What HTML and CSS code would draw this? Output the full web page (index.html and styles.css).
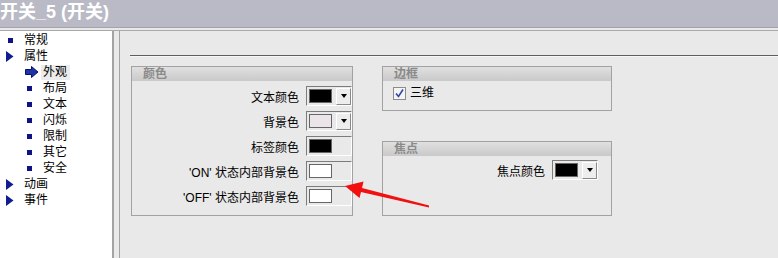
FILE: index.html
```html
<!DOCTYPE html>
<html lang="zh-CN">
<head>
  <meta charset="UTF-8">
  <title>开关_5 (开关)</title>
  <link rel="stylesheet" href="styles.css">
</head>
<body>
  <div class="titlebar">开关_5 (开关)</div>

  <div class="main">
    <!-- 属性树 -->
    <ul class="tree">
      <li class="node"><span class="ico"><i class="sq"></i></span>常规</li>
      <li class="node"><span class="ico"><svg class="tri" width="8" height="11" viewBox="0 0 8 11"><polygon points="0,0 7.5,5.5 0,11" /></svg></span>属性</li>
      <li class="node sub"><span class="ico"><svg class="cur" width="14" height="12" viewBox="0 0 14 12"><polygon points="0.5,3.5 6.5,3.5 6.5,0.5 13,6 6.5,11.5 6.5,8.5 0.5,8.5" /></svg></span><span class="sel">外观</span></li>
      <li class="node sub"><span class="ico"><i class="sq"></i></span>布局</li>
      <li class="node sub"><span class="ico"><i class="sq"></i></span>文本</li>
      <li class="node sub"><span class="ico"><i class="sq"></i></span>闪烁</li>
      <li class="node sub"><span class="ico"><i class="sq"></i></span>限制</li>
      <li class="node sub"><span class="ico"><i class="sq"></i></span>其它</li>
      <li class="node sub"><span class="ico"><i class="sq"></i></span>安全</li>
      <li class="node"><span class="ico"><svg class="tri" width="8" height="11" viewBox="0 0 8 11"><polygon points="0,0 7.5,5.5 0,11" /></svg></span>动画</li>
      <li class="node"><span class="ico"><svg class="tri" width="8" height="11" viewBox="0 0 8 11"><polygon points="0,0 7.5,5.5 0,11" /></svg></span>事件</li>
    </ul>

    <!-- 外观 页 -->
    <div class="content">
      <div class="rule"></div>
      <div class="groups">
        <div class="group group-color">
          <div class="group-head">颜色</div>
          <div class="color-rows">
            <div class="color-row">文本颜色<div class="field"><span class="swatch black"></span><span class="drop"><i></i></span></div></div>
            <div class="color-row">背景色<div class="field"><span class="swatch grey"></span><span class="drop"><i></i></span></div></div>
            <div class="color-row">标签颜色<div class="field"><span class="swatch black"></span></div></div>
            <div class="color-row">'ON' 状态内部背景色<div class="field"><span class="swatch white"></span></div></div>
            <div class="color-row">'OFF' 状态内部背景色<div class="field"><span class="swatch white"></span></div></div>
          </div>
        </div>

        <div class="side">
          <div class="group group-border">
            <div class="group-head">边框</div>
            <label class="check-row">
              <span class="check"><svg width="11" height="11" viewBox="0 0 11 11"><path d="M2 5.5 L4.5 8.5 L9 1.5" /></svg></span>三维
            </label>
          </div>
          <div class="group group-focus">
            <div class="group-head">焦点</div>
            <div class="focus-row">焦点颜色<div class="field"><span class="swatch black"></span><span class="drop"><i></i></span></div></div>
          </div>
        </div>
      </div>
    </div>
  </div>

  <!-- 标注箭头 -->
  <svg class="annot" width="778" height="258" viewBox="0 0 778 258">
    <polygon points="345,186 363.5,181.5 362,188 429,205.5 429,207.5 361,192 359.5,198" />
  </svg>
</body>
</html>
```

FILE: styles.css
```css
body {
  margin: 0;
  width: 778px;
  height: 258px;
  overflow: hidden;
  position: relative;
  background: #e9e9e9;
  font-family: "Liberation Sans", "Noto Sans CJK SC", sans-serif;
  font-size: 12px;
  color: #000;
}
.titlebar {
  height: 27px;
  background: #b9bac5;
  border-bottom: 1px solid #a3a3ab;
  color: #fff;
  font-size: 18px;
  font-weight: bold;
  line-height: 25px;
  white-space: nowrap;
}
.main {
  display: flex;
  margin-top: 2px;
  border-top: 1px solid #a9a9a9;
  height: 227px;
}
.tree {
  list-style: none;
  margin: 0;
  padding: 1px 0 0;
  width: 112px;
  background: #fff;
  border-right: 2px solid #a4a4a4;
}
.node {
  display: flex;
  align-items: center;
  height: 16px;
  line-height: 16px;
  padding-left: 6px;
}
.node.sub {
  padding-left: 25px;
}
.ico {
  width: 18px;
  height: 16px;
  display: flex;
  align-items: center;
}
.sq {
  display: block;
  width: 5px;
  height: 5px;
  margin-left: 2px;
  background: #10108a;
}
.tri polygon {
  fill: #0f1c92;
}
.cur polygon {
  fill: #1f33a8;
  stroke: #0a1068;
  stroke-width: 1;
}
.sel {
  background: #ececec;
  line-height: 15px;
  padding: 0 3px 0 2px;
  margin-left: -2px;
}
.content {
  flex: 1;
  margin-left: 5px;
  border-left: 1px solid #a4a4a4;
  padding-left: 11px;
}
.rule {
  margin-top: 24px;
  margin-left: -1px;
  border-top: 1px solid #5e5e5e;
  border-bottom: 1px solid #f6f6f6;
}
.groups {
  display: flex;
  align-items: flex-start;
  gap: 29px;
  margin-top: 9px;
}
.group {
  border: 1px solid #a2a2a2;
}
.group-head {
  height: 14px;
  line-height: 14px;
  padding-left: 11px;
  background: linear-gradient(#e0e0e0, #c9c9c9);
  color: #8a8a8a;
  font-weight: bold;
}
.group-color {
  width: 220px;
  height: 148px;
}
.color-rows {
  display: flex;
  flex-direction: column;
  gap: 5px;
  padding-top: 5px;
}
.color-row,
.focus-row {
  display: flex;
  justify-content: flex-end;
  align-items: center;
  gap: 7px;
  height: 20px;
}
.field {
  box-sizing: border-box;
  width: 46px;
  height: 20px;
  display: flex;
  align-items: center;
  padding-left: 2px;
  border: 1px solid;
  border-color: #7c7c7c #fff #fff #7c7c7c;
}
.swatch {
  width: 21px;
  height: 12px;
  border: 1px solid #666;
}
.swatch.black { background: #000; }
.swatch.grey { background: #ebe5e9; }
.swatch.white { background: #fff; }
.drop {
  box-sizing: border-box;
  width: 15px;
  height: 17px;
  margin-left: auto;
  display: flex;
  align-items: center;
  justify-content: center;
  background: #ededed;
  border-left: 1px solid #fff;
  border-top: 1px solid #fff;
  border-right: 1px solid #8a8a8a;
  border-bottom: 1px solid #8a8a8a;
}
.drop i {
  width: 0;
  height: 0;
  border-top: 4px solid #000;
  border-left: 3.5px solid transparent;
  border-right: 3.5px solid transparent;
}
.side {
  display: flex;
  flex-direction: column;
  gap: 30px;
  width: 230px;
}
.group-border {
  height: 43px;
}
.group-focus {
  height: 73px;
}
.check-row {
  display: flex;
  align-items: center;
  gap: 4px;
  padding: 6px 0 0 10px;
  line-height: 13px;
}
.check {
  box-sizing: border-box;
  width: 13px;
  height: 13px;
  border: 1px solid #8c8c8c;
  background: #f4f4f4;
  display: flex;
}
.check path {
  fill: none;
  stroke: #2d4aa8;
  stroke-width: 1.6;
}
.focus-row {
  padding: 4px 13px 0 0;
}
.annot {
  position: absolute;
  top: 0;
  left: 0;
  pointer-events: none;
}
.annot polygon {
  fill: #f20f0f;
}
```
